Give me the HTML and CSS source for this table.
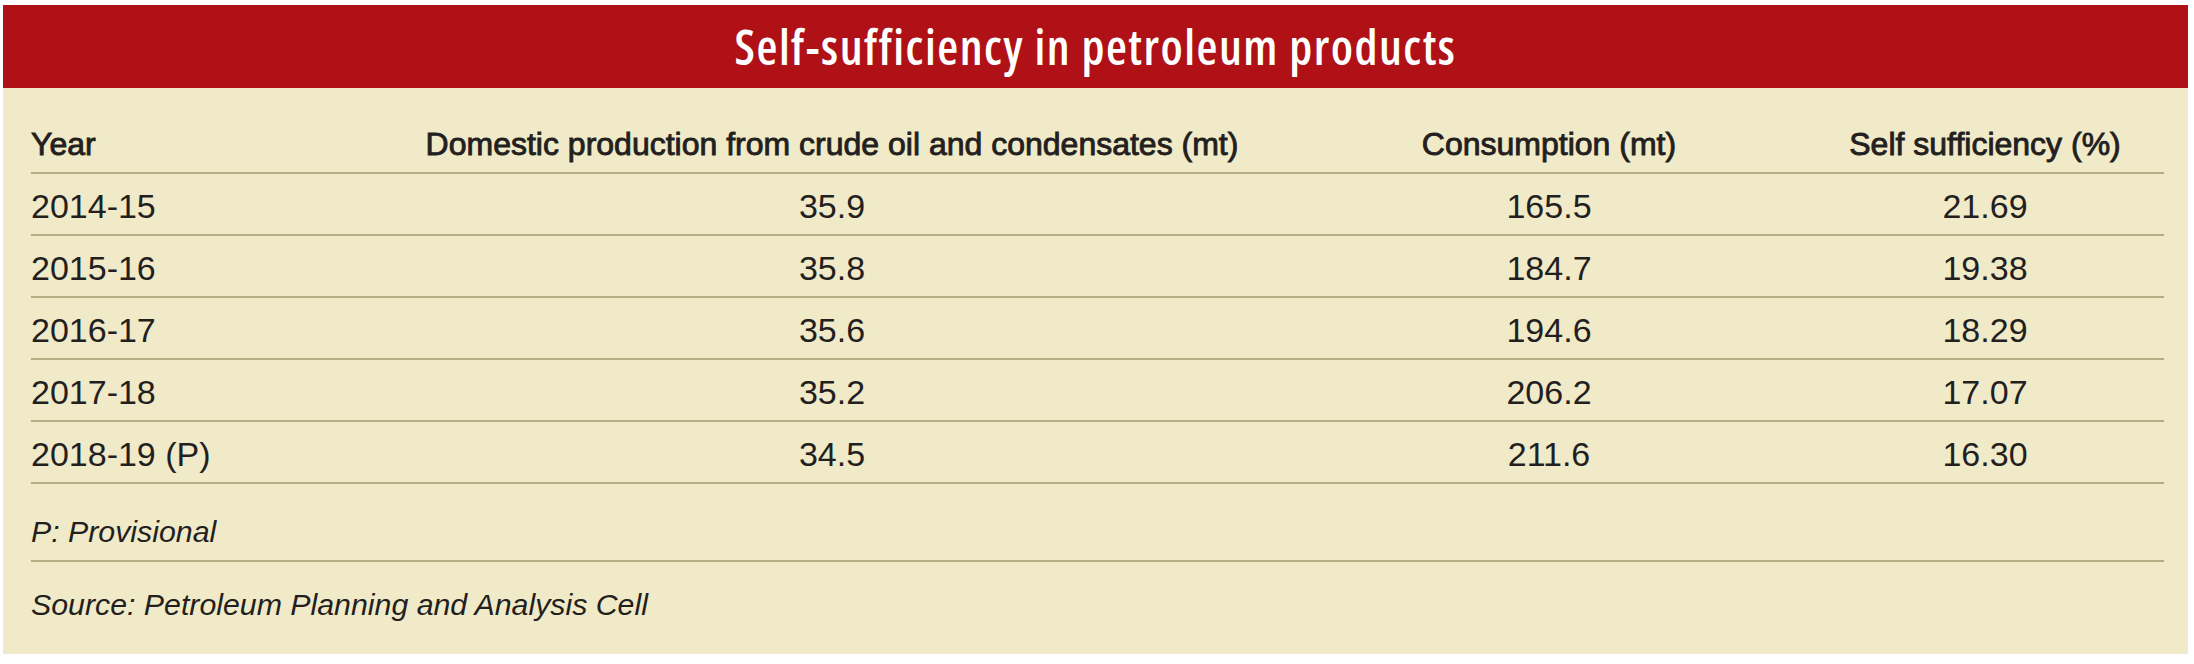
FILE: index.html
```html
<!DOCTYPE html>
<html lang="en">
<head>
<meta charset="utf-8">
<title>Self-sufficiency in petroleum products</title>
<link rel="stylesheet" href="styles.css">
</head>
<body>
<div class="card">
  <div class="card-title">Self-sufficiency in petroleum products</div>
  <div class="card-body">
    <div class="row head">
      <div class="c1">Year</div>
      <div class="c2">Domestic production from crude oil and condensates (mt)</div>
      <div class="c3">Consumption (mt)</div>
      <div class="c4">Self sufficiency (%)</div>
    </div>
    <div class="row">
      <div class="c1">2014-15</div><div class="c2">35.9</div><div class="c3">165.5</div><div class="c4">21.69</div>
    </div>
    <div class="row">
      <div class="c1">2015-16</div><div class="c2">35.8</div><div class="c3">184.7</div><div class="c4">19.38</div>
    </div>
    <div class="row">
      <div class="c1">2016-17</div><div class="c2">35.6</div><div class="c3">194.6</div><div class="c4">18.29</div>
    </div>
    <div class="row">
      <div class="c1">2017-18</div><div class="c2">35.2</div><div class="c3">206.2</div><div class="c4">17.07</div>
    </div>
    <div class="row">
      <div class="c1">2018-19 (P)</div><div class="c2">34.5</div><div class="c3">211.6</div><div class="c4">16.30</div>
    </div>
    <div class="note first">P: Provisional</div>
    <div class="note last">Source: Petroleum Planning and Analysis Cell</div>
  </div>
</div>
</body>
</html>
```

FILE: styles.css
```css
html, body {
  margin: 0;
  padding: 0;
  background: #ffffff;
}

body {
  padding: 5px 6px 10px 3px;
}

.card {
  width: 2185px;
}

.card-title {
  background: #b01117;
  color: #ffffff;
  height: 83px;
  display: flex;
  align-items: center;
  justify-content: center;
  font-family: "Open Sans", "Liberation Sans", sans-serif;
  font-weight: 600;
  font-stretch: 75%;
  font-size: 48px;
  letter-spacing: 1.5px;
}

.card-body {
  background: #f0eac8;
  padding: 0 24px 0 28px;
  font-family: "Liberation Sans", Arial, sans-serif;
  color: #231f20;
}

.row {
  display: grid;
  grid-template-columns: 369px 864px 570px 302px;
  padding: 12px 25px 8px 0;
  font-size: 34px;
  line-height: 40px;
  border-bottom: 2px solid #b3ae84;
}

.row.head {
  padding-top: 36px;
  padding-bottom: 8px;
  font-size: 32px;
}

.row.head > div {
  -webkit-text-stroke: 0.9px #231f20;
}

.c1 {
  text-align: left;
  white-space: nowrap;
}

.c2, .c3, .c4 {
  text-align: center;
  white-space: nowrap;
}

.note {
  font-style: italic;
  font-size: 30.3px;
  line-height: 40px;
}

.note.first {
  padding: 28px 0 8px;
  border-bottom: 2px solid #b3ae84;
}

.note.last {
  padding: 23px 0 29px;
}
```
